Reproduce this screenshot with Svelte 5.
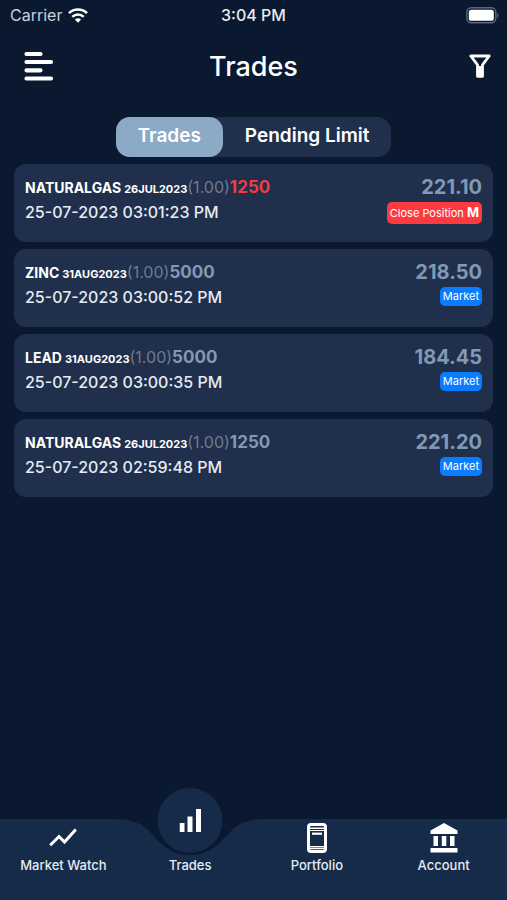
<script lang="ts">
  type Trade = {
    symbol: string;
    expiry: string;
    lots: string;
    qty: number;
    time: string;
    price: string;
    closing?: boolean;
  };

  const trades: Trade[] = [
    { symbol: 'NATURALGAS', expiry: '26JUL2023', lots: '1.00', qty: 1250, time: '25-07-2023 03:01:23 PM', price: '221.10', closing: true },
    { symbol: 'ZINC', expiry: '31AUG2023', lots: '1.00', qty: 5000, time: '25-07-2023 03:00:52 PM', price: '218.50' },
    { symbol: 'LEAD', expiry: '31AUG2023', lots: '1.00', qty: 5000, time: '25-07-2023 03:00:35 PM', price: '184.45' },
    { symbol: 'NATURALGAS', expiry: '26JUL2023', lots: '1.00', qty: 1250, time: '25-07-2023 02:59:48 PM', price: '221.20' }
  ];

  const tabs = ['Trades', 'Pending Limit'];
  let activeTab = $state('Trades');
</script>

<div class="app">
  <div class="status-bar">
    <div class="carrier">
      <span>Carrier</span>
      <svg width="20" height="15" viewBox="0 0 20 15" fill="none" stroke="#fff" stroke-width="2.6">
        <path d="M1 5.2a12.8 12.8 0 0 1 18 0" />
        <path d="M4.3 8.8a8.1 8.1 0 0 1 11.4 0" />
        <path d="M10 14.8l-3.1-3.2a4.5 4.5 0 0 1 6.2 0z" fill="#fff" stroke="none" />
      </svg>
    </div>
    <span class="clock">3:04 PM</span>
    <div class="battery">
      <svg width="33" height="17" viewBox="0 0 33 17">
        <rect x="0.8" y="0.8" width="29" height="15" rx="4.5" fill="none" stroke="#5d677c" stroke-width="1.4" />
        <rect x="2.8" y="2.8" width="25" height="11" rx="2.6" fill="#fff" />
        <path d="M31.2 6v5c1.800-.8 1.800-4.200 0-5z" fill="#5d677c" />
      </svg>
    </div>
  </div>

  <header>
    <button class="icon-btn" aria-label="Menu">
      <svg width="30" height="30" viewBox="0 0 30 30" stroke="#fff" stroke-width="4.200" stroke-linecap="round">
        <path d="M2.500 3h14M2.500 11h24.500M2.500 19.300h14M2.500 27.500h24.500" />
      </svg>
    </button>
    <h1>Trades</h1>
    <button class="icon-btn" aria-label="Filter">
      <svg width="22" height="24" viewBox="0 0 22 24" fill="none" stroke="#fff" stroke-width="2.800" stroke-linejoin="round">
        <path d="M1.800 2h18.400l-6.700 8.800v11.500h-5V10.800z" />
        <path d="M11 12v10" />
      </svg>
    </button>
  </header>

  <main>
    <div class="tabs">
      {#each tabs as tab}
        <button class:active={activeTab === tab} onclick={() => (activeTab = tab)}>{tab}</button>
      {/each}
    </div>

    <ul class="trades">
      {#each trades as trade}
        <li class="card">
          <div class="details">
            <div class="name">
              <strong class="symbol">{trade.symbol}</strong>
              <strong class="expiry">{trade.expiry}</strong>
              <span class="lots">({trade.lots})</span>
              <strong class="qty" class:sell={trade.closing}>{trade.qty}</strong>
            </div>
            <time>{trade.time}</time>
          </div>
          <div class="side">
            <strong class="price">{trade.price}</strong>
            {#if trade.closing}
              <button class="tag close">Close Position <b>M</b></button>
            {:else}
              <span class="tag">Market</span>
            {/if}
          </div>
        </li>
      {/each}
    </ul>
  </main>

  <nav>
    <a href="#market-watch">
      <span class="nav-icon">
        <svg width="28" height="19" viewBox="0 0 28 19" fill="none" stroke="#fff" stroke-width="3">
          <path d="M1.200 17.200L10 8.500l5.500 5.500L26.800 1.500" />
        </svg>
      </span>
      <span>Market Watch</span>
    </a>
    <a href="#trades" class="current" aria-current="page">
      <svg class="notch" width="150" height="37" viewBox="0 0 150 37" fill="#0b1930">
        <path d="M0 0C18 0 27 5 35 13C46 25 56 36 75 36S104 25 115 13C123 5 132 0 150 0z" />
      </svg>
      <span class="bubble">
        <svg width="22" height="23" viewBox="0 0 22 23" fill="#fff">
          <path d="M0 14h5v9H0zM8 7.500h5V23H8zM16.500 0h5v23h-5z" />
        </svg>
      </span>
      <span>Trades</span>
    </a>
    <a href="#portfolio">
      <span class="nav-icon">
        <svg width="20" height="30" viewBox="0 0 20 30" fill="none" stroke="#fff">
          <rect x="1.500" y="1.500" width="17" height="27" rx="2.500" stroke-width="3" />
          <path d="M2 5.300h16M2 25.500h16" stroke-width="1.400" />
          <path d="M2 7.500h16M2 23.600h16" stroke-width="1.200" />
          <path d="M5 10.700h10" stroke-width="2.200" />
        </svg>
      </span>
      <span>Portfolio</span>
    </a>
    <a href="#account">
      <span class="nav-icon">
        <svg width="28" height="30" viewBox="0 0 28 30" fill="#fff">
          <path d="M14 0l13.500 7.500V11H.5V7.500zM3.500 13H8v10H3.500zM11.800 13h4.500v10h-4.500zM20 13h4.500v10H20zM.5 25h27v4.500H.5z" />
        </svg>
      </span>
      <span>Account</span>
    </a>
  </nav>
</div>

<style>
  :global(body) {
    margin: 0;
    background: #0b1930;
  }

  .app {
    display: flex;
    flex-direction: column;
    min-height: 100vh;
    font-family: Inter, 'Liberation Sans', sans-serif;
    color: #fff;
  }

  button {
    border: 0;
    padding: 0;
    background: none;
    color: inherit;
    font-family: inherit;
    cursor: pointer;
  }

  svg {
    display: block;
  }

  .status-bar {
    display: grid;
    grid-template-columns: 1fr auto 1fr;
    align-items: center;
    height: 30px;
    padding: 0 8px;
    font-size: 16px;
    color: #e6ebf3;
  }

  .carrier {
    display: flex;
    align-items: center;
    gap: 6px;
    padding-left: 2px;
    color: #c9d0dc;
  }

  .clock {
    font-weight: 500;
  }

  .battery {
    justify-self: end;
  }

  header {
    display: grid;
    grid-template-columns: 1fr auto 1fr;
    align-items: center;
    height: 72px;
    padding: 0 16px;
  }

  .icon-btn {
    justify-self: end;
  }

  .icon-btn:first-child {
    justify-self: start;
    margin-left: 8px;
  }

  h1 {
    margin: 0;
    font-size: 27px;
    font-weight: 500;
  }

  main {
    flex: 1;
    display: flex;
    flex-direction: column;
    padding: 15px 14px;
  }

  .tabs {
    display: flex;
    align-self: center;
    margin-bottom: 7px;
    border-radius: 14px;
    background: #202f4b;
  }

  .tabs button {
    height: 40px;
    padding: 0 22px 3px;
    border-radius: 14px;
    font-size: 19px;
    font-weight: 600;
  }

  .tabs button.active {
    background: #8ca9c6;
  }

  .trades {
    display: flex;
    flex-direction: column;
    gap: 7px;
    margin: 0;
    padding: 0;
    list-style: none;
  }

  .card {
    display: flex;
    justify-content: space-between;
    padding: 11px 11px 18px;
    border-radius: 12px;
    background: #202f4b;
  }

  .name {
    display: flex;
    align-items: baseline;
    height: 25px;
    line-height: 24px;
  }

  .symbol {
    margin-right: 3px;
    font-size: 14px;
  }

  .expiry {
    font-size: 11px;
  }

  .lots {
    font-size: 16px;
    color: #6f7a8e;
  }

  .qty {
    font-size: 17px;
    color: #8299b5;
  }

  .qty.sell {
    color: #f03c42;
  }

  time {
    display: block;
    font-size: 16px;
    font-weight: 500;
    line-height: 24px;
    color: #e6ebf3;
  }

  .side {
    display: flex;
    flex-direction: column;
    align-items: flex-end;
  }

  .price {
    font-size: 20px;
    line-height: 24px;
    color: #8299b5;
  }

  .tag {
    margin-top: 3px;
    padding: 0 3px;
    border-radius: 5px;
    background: #0a7cff;
    font-size: 11px;
    line-height: 19px;
  }

  .tag.close {
    background: #fb3b40;
    line-height: 21px;
  }

  .tag b {
    font-size: 13px;
  }

  nav {
    display: flex;
    height: 81px;
    background: #162a49;
  }

  nav a {
    position: relative;
    flex: 1;
    display: flex;
    flex-direction: column;
    align-items: center;
    justify-content: flex-end;
    padding-bottom: 26px;
    font-size: 13px;
    font-weight: 500;
    line-height: 18px;
    color: #e6ebf3;
    text-decoration: none;
  }

  .nav-icon {
    display: flex;
    align-items: center;
    height: 38px;
  }

  .notch {
    position: absolute;
    top: 0;
    left: 50%;
    transform: translateX(-50%);
  }

  .bubble {
    position: absolute;
    top: -31px;
    left: 50%;
    transform: translateX(-50%);
    display: flex;
    align-items: center;
    justify-content: center;
    width: 65px;
    height: 65px;
    border-radius: 50%;
    background: #162a49;
  }
</style>
